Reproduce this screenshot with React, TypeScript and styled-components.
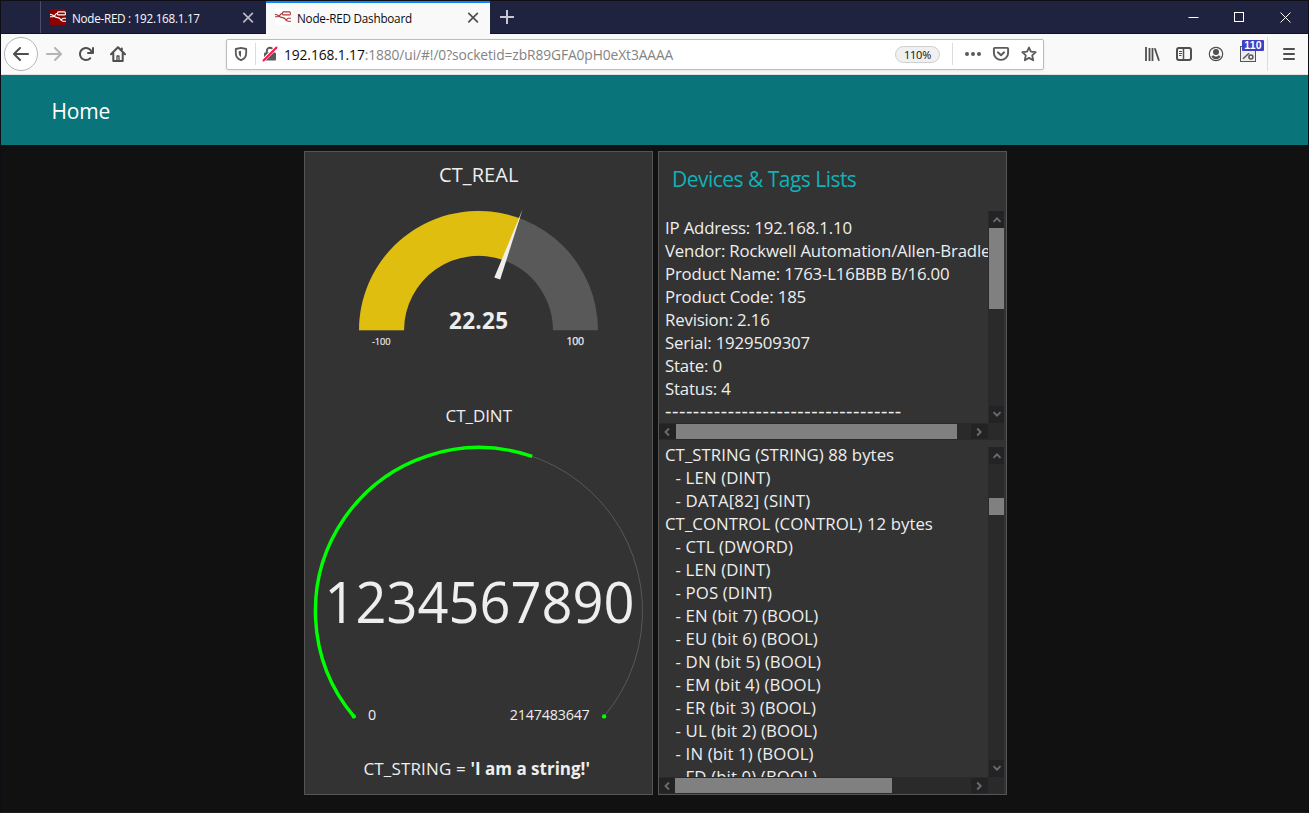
import React from 'react';
import styled, { createGlobalStyle } from 'styled-components';

const UI_FONT = "'Open Sans', 'Noto Sans', sans-serif";

const GlobalStyle = createGlobalStyle`
  * { box-sizing: border-box; }
  body { margin: 0; background: #111; font-family: ${UI_FONT}; }
`;

/* ---------- browser chrome ---------- */

const Window = styled.div`
  width: 1309px;
  height: 813px;
  display: flex;
  flex-direction: column;
  border: 1px solid #0e0e14;
  border-bottom-color: #1d1e1b;
  background: #111;
  overflow: hidden;
`;

const TabBar = styled.div`
  height: 33px;
  flex: none;
  display: flex;
  background: #202340;
  border-bottom: 1px solid #160f26;
`;

const TabLead = styled.div`
  width: 40px;
  border-right: 1px solid #4c4e66;
`;

const Tab = styled.div<{ $active?: boolean }>`
  width: ${(p) => (p.$active ? 224 : 225)}px;
  height: ${(p) => (p.$active ? 33 : 32)}px;
  padding: ${(p) => (p.$active ? '0 10px 1px 9px' : '0 11px 0 9px')};
  display: flex;
  align-items: center;
  background: ${(p) => (p.$active ? '#f9f9fa' : 'transparent')};
  box-shadow: ${(p) => (p.$active ? 'inset 0 2px 0 #0a84ff' : 'none')};
  color: ${(p) => (p.$active ? '#0c0c0d' : '#f9f9fa')};
`;

const TabTitle = styled.span<{ $track: number }>`
  flex: 1;
  margin-left: 6px;
  padding-top: 3px;
  font-size: 11.7px;
  line-height: 17px;
  letter-spacing: ${(p) => p.$track}px;
  white-space: nowrap;
`;

const NewTab = styled.div`
  width: 34px;
  display: flex;
  align-items: center;
  justify-content: center;
`;

const WindowControls = styled.div`
  margin-left: auto;
  width: 138px;
  display: grid;
  grid-template-columns: repeat(3, 46px);
  align-items: center;
  justify-items: center;
`;

const Toolbar = styled.div`
  height: 41px;
  flex: none;
  display: flex;
  align-items: center;
  padding-left: 3px;
  background: #f9f9fa;
  border-bottom: 1px solid #e0e0e1;
`;

const BackButton = styled.div`
  width: 34px;
  height: 34px;
  display: flex;
  align-items: center;
  justify-content: center;
  border: 1px solid #b5b5b7;
  border-radius: 50%;
  background: #fff;
`;

const IconSlot = styled.div<{ $gap: number; $dim?: boolean }>`
  position: relative;
  flex: none;
  width: 16px;
  height: 16px;
  margin-left: ${(p) => p.$gap}px;
  opacity: ${(p) => (p.$dim ? 0.4 : 1)};
  svg { display: block; overflow: visible; }
`;

const UrlBar = styled.div`
  width: 818px;
  height: 31px;
  margin-left: 100px;
  padding: 0 6px;
  display: flex;
  align-items: center;
  background: #fff;
  border: 1px solid #bcbcbe;
  border-radius: 2px;
  box-shadow: 0 1px 3px rgba(0, 0, 0, 0.08);
`;

const Divider = styled.div<{ $h: number; $gap: number }>`
  flex: none;
  width: 1px;
  height: ${(p) => p.$h}px;
  margin-left: ${(p) => p.$gap}px;
  background: #dcdcdd;
`;

const Url = styled.div`
  flex: 1;
  margin-left: 6px;
  padding-top: 1px;
  font-size: 13.8px;
  line-height: 20px;
  letter-spacing: -0.1px;
  color: #838385;
  white-space: nowrap;
`;

const Host = styled.span`
  color: #0c0c0d;
`;

const ZoomPill = styled.div`
  width: 45px;
  height: 17px;
  border: 1px solid #cfcfd0;
  border-radius: 9px;
  background: #f0f0f1;
  color: #0c0c0d;
  font-size: 11px;
  line-height: 16px;
  letter-spacing: -0.25px;
  text-align: center;
`;

const Badge = styled.div`
  position: absolute;
  left: 2px;
  top: -6px;
  width: 22px;
  height: 11px;
  border-radius: 1px;
  background: #4040c4;
  color: #fff;
  font: 700 10.5px/11px 'Liberation Sans', Arial, sans-serif;
  letter-spacing: 0.2px;
  text-align: center;
`;

/* ---------- dashboard ---------- */

const PageHeader = styled.div`
  height: 70px;
  flex: none;
  display: flex;
  align-items: center;
  padding: 2px 0 0 50.5px;
  background: #097479;
  color: #fff;
  font-size: 21px;
  letter-spacing: -0.15px;
`;

const Board = styled.div`
  display: flex;
  gap: 5px;
  padding: 6px 0 0 303px;
`;

const Card = styled.div`
  width: 349px;
  height: 644px;
  flex: none;
  display: flex;
  flex-direction: column;
  border: 1px solid #555;
  background: #333;
  color: #eee;
  overflow: hidden;
`;

const Dial = styled.svg`
  display: block;
  flex: none;
  font-family: ${UI_FONT};
  fill: #eee;
`;

const StringRow = styled.div`
  height: 37px;
  padding-left: 58.5px;
  line-height: 37px;
  font-size: 17px;
  letter-spacing: 0.15px;
  white-space: pre;
`;

const StringValue = styled.b`
  letter-spacing: 0;
`;

const CardTitle = styled.div`
  height: 59px;
  flex: none;
  padding-left: 13px;
  line-height: 55px;
  font-size: 21px;
  letter-spacing: -0.52px;
  color: #0fb2b8;
`;

const ScrollPane = styled.div<{ $h: number; $after?: number }>`
  flex: none;
  width: 345px;
  height: ${(p) => p.$h}px;
  margin-bottom: ${(p) => p.$after || 0}px;
  display: grid;
  grid-template-columns: 1fr 16px;
  grid-template-rows: 1fr 17px;
`;

const Lines = styled.div<{ $shift: number; $track: number }>`
  min-width: 0;
  min-height: 0;
  overflow: hidden;
  padding-left: 6px;
  font-size: 16.8px;
  line-height: 23px;
  letter-spacing: ${(p) => p.$track}px;
  white-space: pre;
  &::before {
    content: '';
    display: block;
    margin-top: ${(p) => p.$shift}px;
  }
`;

const Line = styled.div<{ $indent?: boolean }>`
  padding-left: ${(p) => (p.$indent ? 10.6 : 0)}px;
  letter-spacing: ${(p) => (p.$indent ? '0.12px' : 'inherit')};
`;

const Rule = styled.div`
  height: 23px;
  font-size: 20px;
  line-height: 22px;
  letter-spacing: 0.53px;
`;

const Track = styled.div<{ $row?: boolean }>`
  display: flex;
  flex-direction: ${(p) => (p.$row ? 'row' : 'column')};
  padding: ${(p) => (p.$row ? '1px 0 0' : '0 0 0 1px')};
  background: #2a2a2a;
`;

const Arrow = styled.div`
  flex: none;
  width: 17px;
  height: 17px;
  background: #232325;
  svg { display: block; }
`;

const VArrow = styled(Arrow)`
  width: 15px;
`;

const HArrow = styled(Arrow)`
  height: 15px;
`;

const Thumb = styled.div<{ $size: number; $offset: number; $row?: boolean }>`
  flex: none;
  background: #808080;
  ${(p) =>
    p.$row
      ? `width: ${p.$size}px; height: 15px; margin: 0 auto 0 ${p.$offset}px;`
      : `height: ${p.$size}px; margin: ${p.$offset}px 0 auto;`}
`;

const Corner = styled.div`
  background: #2a2a2a;
`;

/* ---------- icons ---------- */

const INK = '#4f4f51';

const Logo = ({ bg, ink }: { bg: string; ink: string }) => (
  <svg width="16" height="16" viewBox="0 0 16 16" fill="none" stroke={ink} strokeWidth="1.1">
    <rect width="16" height="16" rx="1" fill={bg} stroke="none" />
    <rect x="7.500" y="2.900" width="7.900" height="3" rx="1" />
    <path d="M0 5.400c4 0 3.500 3.200 7.500 3.200 3.500 0 3 3.600 5.500 3.600h3M0 7.800h2.500C5.500 7.800 4.500 4.400 7.500 4.400M16 9.300h-2.500c-1.500 0-1.500 1.800-3 1.800" />
  </svg>
);

const Close = ({ color }: { color: string }) => (
  <svg width="14" height="14" viewBox="0 0 14 14" stroke={color} strokeWidth="1.7" strokeLinecap="round">
    <path d="M2.8 3.3l8.6 8.6M11.4 3.3l-8.6 8.6" />
  </svg>
);

const arrowLeft =
  'M15 7H3.414l4.293-4.293a1 1 0 0 0-1.414-1.414l-6 6a1 1 0 0 0 0 1.414l6 6a1 1 0 0 0 1.414-1.414L3.414 9H15a1 1 0 0 0 0-2z';

const chevrons = {
  up: 'M4.500 10.800L8 7.300l3.500 3.500',
  down: 'M4.500 6.200L8 9.700l3.500-3.500',
  left: 'M10 4.500L6.500 8l3.500 3.500',
  right: 'M6.200 4.500L9.700 8l-3.500 3.500',
};

const Chevron = ({ to }: { to: keyof typeof chevrons }) => (
  <svg width="16" height="16" viewBox="0 0 16 16" fill="none" stroke="#6c6c6e" strokeWidth="1.900">
    <path d={chevrons[to]} />
  </svg>
);

/* ---------- data ---------- */

const deviceLines = [
  'IP Address: 192.168.1.10',
  'Vendor: Rockwell Automation/Allen-Bradley',
  'Product Name: 1763-L16BBB B/16.00',
  'Product Code: 185',
  'Revision: 2.16',
  'Serial: 1929509307',
  'State: 0',
  'Status: 4',
];

const tagLines = [
  'CT_STRING (STRING) 88 bytes',
  '- LEN (DINT)',
  '- DATA[82] (SINT)',
  'CT_CONTROL (CONTROL) 12 bytes',
  '- CTL (DWORD)',
  '- LEN (DINT)',
  '- POS (DINT)',
  '- EN (bit 7) (BOOL)',
  '- EU (bit 6) (BOOL)',
  '- DN (bit 5) (BOOL)',
  '- EM (bit 4) (BOOL)',
  '- ER (bit 3) (BOOL)',
  '- UL (bit 2) (BOOL)',
  '- IN (bit 1) (BOOL)',
  '- FD (bit 0) (BOOL)',
];

function Chrome() {
  return (
    <>
      <TabBar>
        <TabLead />
        <Tab>
          <Logo bg="#8f0000" ink="#fff" />
          <TabTitle $track={-0.27}>Node-RED : 192.168.1.17</TabTitle>
          <Close color="#b9bac4" />
        </Tab>
        <Tab $active>
          <Logo bg="#fff" ink="#a8383a" />
          <TabTitle $track={-0.22}>Node-RED Dashboard</TabTitle>
          <Close color="#4f4f51" />
        </Tab>
        <NewTab>
          <svg width="14" height="14" viewBox="0 0 14 14" stroke="#c6c7d0" strokeWidth="2">
            <path d="M7 0v14M0 7h14" />
          </svg>
        </NewTab>
        <WindowControls>
          <svg width="11" height="11" viewBox="0 0 11 11"><path d="M.5 5.500h10" stroke="#fff" /></svg>
          <svg width="11" height="11" viewBox="0 0 11 11"><rect x=".5" y=".5" width="9" height="9" fill="none" stroke="#fff" /></svg>
          <svg width="11" height="11" viewBox="0 0 11 11"><path d="M.5.5l10 10M10.500.5l-10 10" stroke="#fff" /></svg>
        </WindowControls>
      </TabBar>
      <Toolbar>
        <BackButton>
          <svg width="16" height="16" viewBox="0 0 16 16" fill={INK}><path d={arrowLeft} /></svg>
        </BackButton>
        <IconSlot $gap={8} $dim>
          <svg width="16" height="16" viewBox="0 0 16 16" fill={INK}><path d={arrowLeft} transform="matrix(-1 0 0 1 16 0)" /></svg>
        </IconSlot>
        <IconSlot $gap={16}>
          <svg width="16" height="16" viewBox="0 0 16 16" fill={INK}>
            <path d="M15 1a1 1 0 0 0-1 1v2.418A6.995 6.995 0 1 0 8 15a6.954 6.954 0 0 0 4.95-2.05 1 1 0 0 0-1.414-1.414A5.019 5.019 0 1 1 12.549 6H10a1 1 0 0 0 0 2h5a1 1 0 0 0 1-1V2a1 1 0 0 0-1-1z" />
          </svg>
        </IconSlot>
        <IconSlot $gap={16}>
          <svg width="16" height="16" viewBox="0 0 16 16" fill="none" stroke={INK} strokeWidth="2" strokeLinejoin="round" strokeLinecap="round">
            <path d="M1 8.200l7-7 7 7M3.300 7.500V15h9.400V7.500M11.800 2.500V4" />
            <path d="M7 14.500V10h2v4.500" strokeWidth="1.300" />
          </svg>
        </IconSlot>
        <UrlBar>
          <IconSlot $gap={0}>
            <svg width="16" height="16" viewBox="0 0 16 16" fill="none" stroke="#5a5a5c" strokeWidth="1.800" strokeLinejoin="round">
              <path d="M8 1.900l5.200 1.100v4c0 3.800-2 6-5.200 7.200C4.800 13 2.800 10.800 2.800 7V3z" />
              <path d="M8 4.800v6.200C6.300 10 5.700 8.700 5.700 7V5.300z" fill="#5a5a5c" stroke="none" />
            </svg>
          </IconSlot>
          <Divider $h={22} $gap={6} />
          <IconSlot $gap={6}>
            <svg width="16" height="16" viewBox="0 0 16 16" fill="none">
              <rect x="2" y="6.600" width="12" height="8" rx="1" fill="#5a5a5c" />
              <path d="M4.800 7V5a3.200 3.200 0 0 1 6.400 0v2" stroke="#5a5a5c" strokeWidth="1.900" />
              <path d="M.8 14.800L14.200 1.400" stroke="#fff" strokeWidth="3.600" />
              <path d="M1.500 14.500L14.500 1.500" stroke="#ff0f47" strokeWidth="1.900" strokeLinecap="round" />
            </svg>
          </IconSlot>
          <Url><Host>192.168.1.17</Host>:1880/ui/#!/0?socketid=zbR89GFA0pH0eXt3AAAA</Url>
          <ZoomPill>110%</ZoomPill>
          <Divider $h={22} $gap={12} />
          <IconSlot $gap={12}>
            <svg width="16" height="16" viewBox="0 0 16 16" fill="#5a5a5c">
              <circle cx="2" cy="8" r="2" /><circle cx="8" cy="8" r="2" /><circle cx="14" cy="8" r="2" />
            </svg>
          </IconSlot>
          <IconSlot $gap={12}>
            <svg width="16" height="16" viewBox="0 0 16 16" fill="none" stroke="#5a5a5c" strokeWidth="1.900" strokeLinecap="round" strokeLinejoin="round">
              <path d="M1.800 1.900h12.400a.9.9 0 0 1 .9.900V7a7.100 6.900 0 0 1-14.200 0V2.800a.9.9 0 0 1 .9-.900z" />
              <path d="M4.900 6.300L8 9.200l3.100-2.900" />
            </svg>
          </IconSlot>
          <IconSlot $gap={12}>
            <svg width="16" height="16" viewBox="0 0 16 16" fill="none" stroke="#5a5a5c" strokeWidth="1.800" strokeLinejoin="round">
              <path d="M8 1.500l1.900 4.200 4.800.5-3.500 3.200 1 4.900L8 11.900l-4.200 2.400 1-4.900L1.300 6.200l4.800-.5z" />
            </svg>
          </IconSlot>
        </UrlBar>
        <IconSlot $gap={100}>
          <svg width="16" height="16" viewBox="0 0 16 16" fill="none" stroke={INK} strokeWidth="1.800">
            <path d="M2 1v14M5.500 2v13M8.500 2v13M10.800 2.300L15 14.800" />
          </svg>
        </IconSlot>
        <IconSlot $gap={16}>
          <svg width="16" height="16" viewBox="0 0 16 16" fill="none" stroke={INK} strokeWidth="2">
            <rect x="1" y="2" width="14" height="12" rx="2" />
            <path d="M7.500 2v12" strokeWidth="1.500" />
            <path d="M3 5.500h3M3 7.500h3M3 9.500h2.500" strokeWidth="1" />
          </svg>
        </IconSlot>
        <IconSlot $gap={16}>
          <svg width="16" height="16" viewBox="0 0 16 16" fill="none" stroke={INK}>
            <circle cx="8" cy="8" r="6.700" strokeWidth="1.200" />
            <circle cx="8" cy="6" r="3" fill={INK} stroke="none" />
            <path d="M3.400 10.200c1-.6 2-.8 2.800-.3 1 .7 2.600.7 3.600 0 .8-.5 1.800-.3 2.800.3-.9 2-2.500 3-4.600 3s-3.700-1-4.600-3z" fill={INK} stroke="none" />
          </svg>
        </IconSlot>
        <IconSlot $gap={16}>
          <svg width="16" height="16" viewBox="0 0 16 16" fill="none" stroke="#555">
            <rect x=".5" y=".5" width="15" height="15" fill="#ededed" />
            <path d="M3 12.800l6-5.500" strokeWidth="1.500" />
            <circle cx="10.900" cy="11" r="2" strokeWidth="1.500" />
          </svg>
          <Badge>110</Badge>
        </IconSlot>
        <Divider $h={34} $gap={11} />
        <IconSlot $gap={13}>
          <svg width="16" height="16" viewBox="0 0 16 16" stroke={INK} strokeWidth="2" strokeLinecap="round">
            <path d="M3 3h10M3 8h10M3 13h10" />
          </svg>
        </IconSlot>
      </Toolbar>
    </>
  );
}

function RealGauge() {
  return (
    <Dial width="347" height="240" viewBox="305 152 347 240">
      <text x="439" y="182" fontSize="20" textLength="79.500">CT_REAL</text>
      <path d="M359 330.300a119.500 119.500 0 0 1 239 0h-45a74.500 74.500 0 0 0-149 0z" fill="#595959" />
      <path d="M359 330.300A119.500 119.500 0 0 1 519.800 218.300L504 260.300A74.500 74.500 0 0 0 404 330.300z" fill="#e0be0f" />
      <path d="M522.600 209.200L500.200 279.600 494.300 277.600z" />
      <text x="449" y="328.500" fontSize="22.500" fontWeight="700" textLength="59">22.25</text>
      <text x="372" y="345" fontSize="9.300" textLength="18.500" stroke="#eee" strokeWidth=".15">-100</text>
      <text x="566.500" y="345" fontSize="10.500" textLength="17.500" stroke="#eee" strokeWidth=".25">100</text>
    </Dial>
  );
}

function DintGauge() {
  return (
    <Dial width="347" height="358" viewBox="305 392 347 358">
      <text x="445.500" y="422" fontSize="17" textLength="66.500">CT_DINT</text>
      <path d="M353.800 716.400A163.600 163.600 0 1 1 604.100 716.400" fill="none" stroke="#585858" />
      <path d="M353.800 716.400A163.600 163.600 0 0 1 532.200 456.400" fill="none" stroke="#0f0" strokeWidth="3.400" />
      <circle cx="353.800" cy="716.400" r="2.200" fill="#0f0" />
      <circle cx="604.100" cy="716.400" r="2.200" fill="#0f0" />
      <text x="324.500" y="622.500" fontSize="57" textLength="310" lengthAdjust="spacingAndGlyphs">1234567890</text>
      <text x="368" y="720" fontSize="14.300">0</text>
      <text x="509.800" y="720" fontSize="14.300" textLength="80">2147483647</text>
    </Dial>
  );
}

export default function App() {
  return (
    <Window>
      <GlobalStyle />
      <Chrome />
      <PageHeader>Home</PageHeader>
      <Board>
        <Card>
          <RealGauge />
          <DintGauge />
          <StringRow>CT_STRING = <StringValue>'I am a string!'</StringValue></StringRow>
        </Card>
        <Card>
          <CardTitle>Devices &amp; Tags Lists</CardTitle>
          <ScrollPane $h={229} $after={7}>
            <Lines $shift={5} $track={-0.17}>
              {deviceLines.map((l) => <Line key={l}>{l}</Line>)}
              <Rule>{'-'.repeat(34)}</Rule>
            </Lines>
            <Track>
              <VArrow><Chevron to="up" /></VArrow>
              <Thumb $size={81} $offset={0} />
              <VArrow><Chevron to="down" /></VArrow>
            </Track>
            <Track $row>
              <HArrow><Chevron to="left" /></HArrow>
              <Thumb $row $size={281} $offset={0} />
              <HArrow><Chevron to="right" /></HArrow>
            </Track>
            <Corner />
          </ScrollPane>
          <ScrollPane $h={347}>
            <Lines $shift={-4} $track={0.04}>
              {tagLines.map((l, i) => <Line key={i} $indent={l[0] === '-'}>{l}</Line>)}
            </Lines>
            <Track>
              <VArrow><Chevron to="up" /></VArrow>
              <Thumb $size={17} $offset={34} />
              <VArrow><Chevron to="down" /></VArrow>
            </Track>
            <Track $row>
              <HArrow><Chevron to="left" /></HArrow>
              <Thumb $row $size={217} $offset={-1} />
              <HArrow><Chevron to="right" /></HArrow>
            </Track>
            <Corner />
          </ScrollPane>
        </Card>
      </Board>
    </Window>
  );
}
